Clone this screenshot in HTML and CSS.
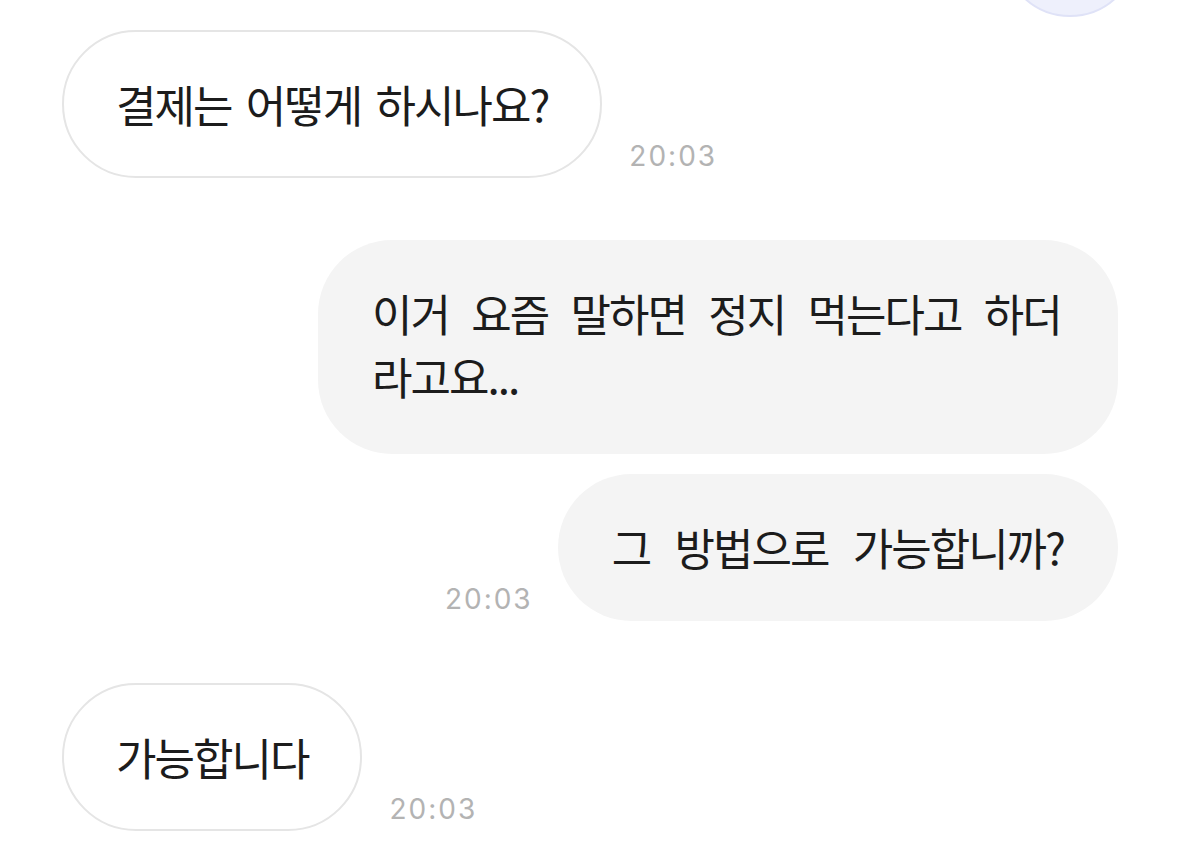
FILE: index.html
```html
<!DOCTYPE html>
<html lang="ko">
<head>
  <meta charset="UTF-8">
  <meta name="viewport" content="width=device-width, initial-scale=1.0">
  <title>채팅</title>
  <link rel="stylesheet" href="styles.css">
</head>
<body>
  <div class="chat">
    <!-- cropped avatar at the top -->
    <div class="peek">
      <div class="avatar"></div>
    </div>

    <div class="row theirs">
      <div class="bubble">결제는 어떻게 하시나요?</div>
      <span class="time">20:03</span>
    </div>

    <div class="row mine">
      <div class="bubble wide">이거 요즘 말하면 정지 먹는다고 하더라고요...</div>
    </div>

    <div class="row mine grouped">
      <span class="time">20:03</span>
      <div class="bubble">그 방법으로 가능합니까?</div>
    </div>

    <div class="row theirs">
      <div class="bubble">가능합니다</div>
      <span class="time">20:03</span>
    </div>
  </div>
</body>
</html>
```

FILE: styles.css
```css
body {
  margin: 0;
  padding: 0;
  background: #ffffff;
  font-family: "Noto Sans CJK KR", "Noto Sans", sans-serif;
  color: #1c1c1c;
}

.chat {
  padding: 0 61px 0 62px;
}

/* Avatar peeking in from the top edge */
.peek {
  height: 17px;
  overflow: hidden;
  display: flex;
  justify-content: flex-end;
  align-items: flex-end;
  margin-right: -20px;
}

.avatar {
  flex: none;
  width: 132px;
  height: 132px;
  border-radius: 50%;
  background-color: #eef0fc;
  border: 2px solid #dfe2f7;
}

/* Message rows */
.row {
  display: flex;
  align-items: flex-end;
  gap: 27px;
  margin-top: 62px;
}

.peek + .row {
  margin-top: 13px;
}

.row.mine {
  justify-content: flex-end;
}

.row.grouped {
  margin-top: 20px;
}

.bubble {
  box-sizing: border-box;
  padding: 42px 54px;
  border-radius: 74px;
  font-size: 44px;
  line-height: 63px;
  letter-spacing: -2px;
  word-spacing: 4px;
}

.theirs .bubble {
  background-color: #ffffff;
  border: 2px solid #e5e5e5;
  padding: 41px 52px 40px;
}

.mine .bubble {
  background-color: #f4f4f4;
  word-spacing: 14px;
}

.mine .bubble.wide {
  max-width: 800px;
  padding: 42px 48px 46px 54px;
  word-spacing: 12px;
}

.time {
  flex: none;
  font-family: "Inter", "Liberation Sans", sans-serif;
  font-size: 28px;
  line-height: 1;
  letter-spacing: 2px;
  color: #b3b3b3;
  margin-bottom: 8px;
}

.mine .time {
  margin-right: -2px;
}
```
